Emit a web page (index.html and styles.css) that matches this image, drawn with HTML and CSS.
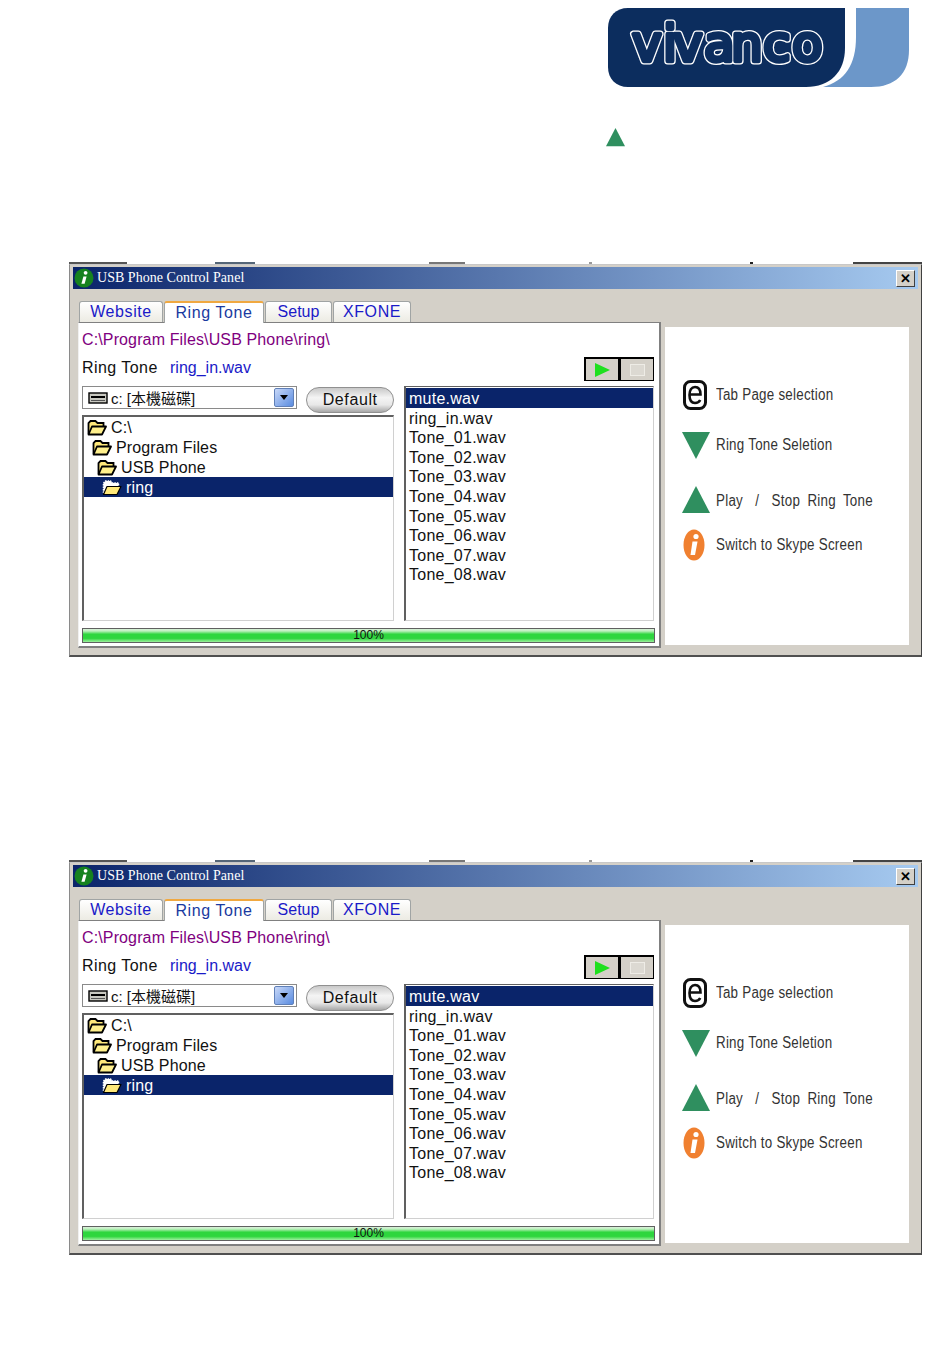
FILE: index.html
```html
<!DOCTYPE html>
<html lang="en">
<head>
    <meta charset="UTF-8">
    <meta name="viewport" content="width=device-width, initial-scale=1.0">
    <title>USB Phone Control Panel</title>
    <link rel="stylesheet" href="styles.css">
</head>
<body>
    <svg class="defs" width="0" height="0">
        <symbol id="folder" viewBox="0 0 20 16">
            <path d="M1.500 14V3l2-2h5l2 2h6v3" fill="#ffe97a" stroke="#000" stroke-width="1.800"/>
            <path d="M1.500 14.500 5 6.500h14l-4 8z" fill="#fff08c" stroke="#000" stroke-width="1.800" stroke-linejoin="round"/>
        </symbol>
        <symbol id="folder-open" viewBox="0 0 20 16">
            <path d="M1.500 13V3l2-2h5l2 2h6v3" fill="#fff" stroke="#fff" stroke-width="1.500" stroke-dasharray="1.500 1"/>
            <path d="M1.500 14.500 5 6.500h14l-4 8z" fill="#ffe97a" stroke="#000" stroke-width="1.200" stroke-linejoin="round"/>
        </symbol>
        <symbol id="drive" viewBox="0 0 20 12">
            <rect x="1" y="1" width="18" height="10" fill="#c8c8c0" stroke="#000" stroke-width="1.400"/>
            <rect x="3" y="4" width="14" height="2" fill="#000"/>
            <rect x="3" y="8" width="14" height="1" fill="#555"/>
        </symbol>
        <symbol id="badge-green" viewBox="0 0 20 20">
            <circle cx="10" cy="10" r="9.500" fill="#16821f"/>
            <circle cx="11.600" cy="4.800" r="1.900" fill="#fff"/>
            <path d="M9.400 8.400h3.200l-2 7.400h-3.200z" fill="#fff"/>
        </symbol>
        <symbol id="icon-e" viewBox="0 0 24 30">
            <rect x="1.500" y="1.500" width="21" height="27" rx="6" fill="#fff" stroke="#111" stroke-width="3"/>
            <path d="M7 14.500h10.500c0-5-2-7.500-5.500-7.500S6.500 10 6.500 15s2 8 5.500 8c2.500 0 4.200-1 5.200-3" fill="none" stroke="#111" stroke-width="2.600"/>
        </symbol>
        <symbol id="icon-down" viewBox="0 0 28 28"><path d="M0 1h28L14 28z" fill="#2f8f5f"/></symbol>
        <symbol id="icon-up" viewBox="0 0 28 28"><path d="M0 27h28L14 0z" fill="#2f8f5f"/></symbol>
        <symbol id="icon-info" viewBox="0 0 22 32">
            <ellipse cx="11" cy="16" rx="10.500" ry="15.500" fill="#f08030"/>
            <circle cx="13" cy="7.500" r="2.600" fill="#fff"/>
            <path d="M9.500 12.500h5L12 26H7.500z" fill="#fff"/>
        </symbol>
    </svg>

    <header class="page-top">
        <svg class="logo" width="301" height="79" viewBox="0 0 301 79">
            <defs>
                <text id="logo-word" class="logo-text" x="24 55 65 96 123 155 184" y="53">vivanco</text>
            </defs>
            <path d="M248 0h53v42c0 24-14 37-38 37h-48c22-6 33-22 33-50z" fill="#6c97c9"/>
            <path d="M20 0h217v40c0 24-15 39-39 39H20C8 79 0 71 0 59V20C0 8 8 0 20 0z" fill="#0c2d5e"/>
            <use class="logo-outline" href="#logo-word"/>
            <use class="logo-fill" href="#logo-word"/>
        </svg>
        <svg class="top-arrow" width="19" height="19"><use href="#icon-up"/></svg>
    </header>

    <section class="shot">
        <div class="scrap"></div>
        <div class="window">
            <div class="titlebar">
                <svg class="title-icon" width="20" height="20"><use href="#badge-green"/></svg>
                <span class="title-text">USB Phone Control Panel</span>
                <span class="close">&#10005;</span>
            </div>
            <div class="window-body">
                <div class="left-col">
                    <div class="tabs">
                        <span class="tab tab-website">Website</span>
                        <span class="tab tab-ring active">Ring Tone</span>
                        <span class="tab tab-setup">Setup</span>
                        <span class="tab tab-xfone">XFONE</span>
                    </div>
                    <div class="panel">
                        <div class="path">C:\Program Files\USB Phone\ring\</div>
                        <div class="tone-row">
                            <span class="tone-label">Ring Tone</span>
                            <span class="tone-file">ring_in.wav</span>
                            <span class="player">
                                <span class="player-btn"><span class="play"></span></span>
                                <span class="player-btn"><span class="stop"></span></span>
                            </span>
                        </div>
                        <div class="browser">
                            <div class="browser-left">
                                <div class="combo-row">
                                    <div class="combo">
                                        <svg class="drive" width="20" height="12"><use href="#drive"/></svg>
                                        <span class="combo-text">c: [本機磁碟]</span>
                                        <span class="combo-arrow"></span>
                                    </div>
                                    <span class="default-btn">Default</span>
                                </div>
                                <div class="tree">
                                    <div class="tree-row level-0"><svg width="20" height="16"><use href="#folder"/></svg>C:\</div>
                                    <div class="tree-row level-1"><svg width="20" height="16"><use href="#folder"/></svg>Program Files</div>
                                    <div class="tree-row level-2"><svg width="20" height="16"><use href="#folder"/></svg>USB Phone</div>
                                    <div class="tree-row level-3 selected"><svg width="20" height="16"><use href="#folder-open"/></svg>ring</div>
                                </div>
                            </div>
                            <div class="file-list">
                                <div class="file selected">mute.wav</div>
                                <div class="file">ring_in.wav</div>
                                <div class="file">Tone_01.wav</div>
                                <div class="file">Tone_02.wav</div>
                                <div class="file">Tone_03.wav</div>
                                <div class="file">Tone_04.wav</div>
                                <div class="file">Tone_05.wav</div>
                                <div class="file">Tone_06.wav</div>
                                <div class="file">Tone_07.wav</div>
                                <div class="file">Tone_08.wav</div>
                            </div>
                        </div>
                        <div class="progress">100%</div>
                    </div>
                </div>
                <div class="help">
                    <div class="help-row row-tab"><svg width="24" height="30"><use href="#icon-e"/></svg><span>Tab Page selection</span></div>
                    <div class="help-row row-ring"><svg class="icon-wide" width="28" height="28"><use href="#icon-down"/></svg><span>Ring Tone Seletion</span></div>
                    <div class="help-row row-play"><svg class="icon-wide" width="28" height="28"><use href="#icon-up"/></svg><span class="wide">Play <i>/</i> Stop Ring Tone</span></div>
                    <div class="help-row row-skype"><svg width="22" height="32"><use href="#icon-info"/></svg><span>Switch to Skype Screen</span></div>
                </div>
            </div>
        </div>
    </section>

    <section class="shot second">
        <div class="scrap"></div>
        <div class="window">
            <div class="titlebar">
                <svg class="title-icon" width="20" height="20"><use href="#badge-green"/></svg>
                <span class="title-text">USB Phone Control Panel</span>
                <span class="close">&#10005;</span>
            </div>
            <div class="window-body">
                <div class="left-col">
                    <div class="tabs">
                        <span class="tab tab-website">Website</span>
                        <span class="tab tab-ring active">Ring Tone</span>
                        <span class="tab tab-setup">Setup</span>
                        <span class="tab tab-xfone">XFONE</span>
                    </div>
                    <div class="panel">
                        <div class="path">C:\Program Files\USB Phone\ring\</div>
                        <div class="tone-row">
                            <span class="tone-label">Ring Tone</span>
                            <span class="tone-file">ring_in.wav</span>
                            <span class="player">
                                <span class="player-btn"><span class="play"></span></span>
                                <span class="player-btn"><span class="stop"></span></span>
                            </span>
                        </div>
                        <div class="browser">
                            <div class="browser-left">
                                <div class="combo-row">
                                    <div class="combo">
                                        <svg class="drive" width="20" height="12"><use href="#drive"/></svg>
                                        <span class="combo-text">c: [本機磁碟]</span>
                                        <span class="combo-arrow"></span>
                                    </div>
                                    <span class="default-btn">Default</span>
                                </div>
                                <div class="tree">
                                    <div class="tree-row level-0"><svg width="20" height="16"><use href="#folder"/></svg>C:\</div>
                                    <div class="tree-row level-1"><svg width="20" height="16"><use href="#folder"/></svg>Program Files</div>
                                    <div class="tree-row level-2"><svg width="20" height="16"><use href="#folder"/></svg>USB Phone</div>
                                    <div class="tree-row level-3 selected"><svg width="20" height="16"><use href="#folder-open"/></svg>ring</div>
                                </div>
                            </div>
                            <div class="file-list">
                                <div class="file selected">mute.wav</div>
                                <div class="file">ring_in.wav</div>
                                <div class="file">Tone_01.wav</div>
                                <div class="file">Tone_02.wav</div>
                                <div class="file">Tone_03.wav</div>
                                <div class="file">Tone_04.wav</div>
                                <div class="file">Tone_05.wav</div>
                                <div class="file">Tone_06.wav</div>
                                <div class="file">Tone_07.wav</div>
                                <div class="file">Tone_08.wav</div>
                            </div>
                        </div>
                        <div class="progress">100%</div>
                    </div>
                </div>
                <div class="help">
                    <div class="help-row row-tab"><svg width="24" height="30"><use href="#icon-e"/></svg><span>Tab Page selection</span></div>
                    <div class="help-row row-ring"><svg class="icon-wide" width="28" height="28"><use href="#icon-down"/></svg><span>Ring Tone Seletion</span></div>
                    <div class="help-row row-play"><svg class="icon-wide" width="28" height="28"><use href="#icon-up"/></svg><span class="wide">Play <i>/</i> Stop Ring Tone</span></div>
                    <div class="help-row row-skype"><svg width="22" height="32"><use href="#icon-info"/></svg><span>Switch to Skype Screen</span></div>
                </div>
            </div>
        </div>
    </section>
</body>
</html>
```
FILE: styles.css
```css
/* Page */
body {
    font-family: "Liberation Sans", Arial, sans-serif;
    margin: 0;
    padding: 0;
    background-color: white;
    color: #111;
    overflow: hidden;
}

.defs {
    position: absolute;
}

.page-top {
    height: 262px;
    box-sizing: border-box;
    padding-top: 8px;
}

.logo {
    display: block;
    margin-left: 608px;
}

.logo-text {
    font-family: "DejaVu Sans", sans-serif;
    font-size: 50px;
}

.logo-outline {
    fill: white;
    stroke: white;
    stroke-width: 7px;
    stroke-linejoin: round;
}

.logo-fill {
    fill: #0c2d5e;
    stroke: #0c2d5e;
    stroke-width: 4.500px;
    stroke-linejoin: round;
}

.top-arrow {
    display: block;
    margin: 41px 0 0 606px;
}

.shot {
    margin-left: 69px;
    width: 853px;
}

.second {
    margin-top: 203px;
}

/* bits of the cropped-off row above each window */
.scrap {
    height: 2px;
    background:
        linear-gradient(#555, #555) 0 0 / 58px 2px no-repeat,
        linear-gradient(#567, #567) 146px 0 / 40px 2px no-repeat,
        linear-gradient(#777, #777) 360px 0 / 36px 2px no-repeat,
        linear-gradient(#999, #999) 520px 0 / 3px 2px no-repeat,
        linear-gradient(#222, #222) 681px 0 / 3px 2px no-repeat,
        linear-gradient(#444, #444) 784px 0 / 69px 2px no-repeat;
}

/* Window */
.window {
    box-sizing: border-box;
    height: 393px;
    padding: 2px 3px 0 3px;
    background-color: #d4d0c8;
    border-top: 1px solid #c8c8c8;
    border-left: 1px solid #8a8a8a;
    border-right: 1px solid #404040;
    border-bottom: 2px solid #505050;
}

.titlebar {
    display: flex;
    align-items: center;
    height: 22px;
    padding: 0 3px 0 1px;
    background: linear-gradient(to right, #0a246a, #a6caf0);
}

.title-text {
    margin-left: 3px;
    font-family: "Liberation Serif", serif;
    font-size: 14px;
    letter-spacing: 0.03px;
    color: white;
}

.close {
    margin-left: auto;
    width: 19px;
    height: 17px;
    font-size: 13px;
    font-weight: bold;
    line-height: 15px;
    text-align: center;
    color: black;
    background-color: #d4d0c8;
    border: 1px solid;
    border-color: #fff #404040 #404040 #fff;
    box-sizing: border-box;
}

.window-body {
    display: flex;
    margin-left: 5px;
}

.left-col {
    width: 583px;
}

/* Tabs */
.tabs {
    display: flex;
    align-items: flex-end;
    height: 21px;
    margin-top: 12px;
    padding-left: 1px;
}

.tab {
    box-sizing: border-box;
    height: 21px;
    margin-right: 1px;
    font-size: 16px;
    line-height: 20px;
    letter-spacing: 0.6px;
    text-align: center;
    color: #1a1ac8;
    background: linear-gradient(#fff, #ecebe3);
    border: 1px solid #a0a4a4;
    border-bottom: none;
    border-radius: 3px 3px 0 0;
}

.tab-website { width: 84px; }
.tab-ring { width: 100px; }
.tab-setup { width: 67px; letter-spacing: 0; }
.tab-xfone { width: 78px; }

.tab.active {
    height: 22px;
    position: relative;
    top: 1px;
    color: #1a3aa0;
    background: white;
    border-top: 2px solid #f0a840;
}

/* Left panel */
.panel {
    box-sizing: border-box;
    height: 326px;
    padding: 8px 0 0 3px;
    background: white;
    border-top: 1px solid #808080;
    border-left: 1px solid #f0f0f0;
    border-right: 2px solid #808080;
    border-bottom: 2px solid #808080;
}

.path {
    height: 18px;
    font-size: 16px;
    line-height: 18px;
    letter-spacing: 0.13px;
    color: #800080;
}

.tone-row {
    display: flex;
    align-items: center;
    height: 24px;
    margin-top: 8px;
    font-size: 16px;
}

.tone-label {
    width: 88px;
    margin-bottom: 2px;
    letter-spacing: 0.45px;
}

.tone-file {
    margin-bottom: 2px;
    color: #1a1ac8;
}

.player {
    display: flex;
    margin-left: auto;
    margin-right: 5px;
}

.player-btn {
    box-sizing: border-box;
    display: flex;
    align-items: center;
    justify-content: center;
    width: 35px;
    height: 24px;
    background-color: #d4d0c8;
    border: 1px solid #000;
    border-width: 2px 1px 1px 2px;
}

.play {
    border-left: 15px solid #1ee01e;
    border-top: 7px solid transparent;
    border-bottom: 7px solid transparent;
}

.stop {
    width: 13px;
    height: 10px;
    background-color: #dcd9d2;
    border: 1px solid #eeece6;
}

.browser {
    display: flex;
    margin-top: 5px;
}

.browser-left {
    width: 312px;
}

.combo-row {
    display: flex;
    height: 29px;
}

.combo {
    box-sizing: border-box;
    display: flex;
    align-items: center;
    width: 216px;
    height: 23px;
    padding: 0 2px 0 5px;
    border: 1px solid #8a8a8a;
    background: white;
}

.combo-text {
    margin-left: 3px;
    font-family: "Liberation Sans", "Noto Sans CJK TC", sans-serif;
    font-size: 15px;
}

.combo-arrow {
    box-sizing: border-box;
    position: relative;
    margin-left: auto;
    width: 20px;
    height: 19px;
    background: linear-gradient(135deg, #c8d8f8, #5a8ce0);
    border: 1px solid #6080b8;
    border-radius: 2px;
}

/* small triangle on the blue drop-down button */
.combo-arrow::after {
    content: "";
    position: absolute;
    left: 5px;
    top: 6px;
    border-top: 5px solid #000;
    border-left: 4px solid transparent;
    border-right: 4px solid transparent;
}

.default-btn {
    box-sizing: border-box;
    width: 88px;
    height: 26px;
    margin: 1px 0 0 9px;
    font-size: 16px;
    line-height: 24px;
    letter-spacing: 0.6px;
    text-align: center;
    background: linear-gradient(#c8c8c8, #f4f4f4 40%, #e8e8e8 70%, #a8a8a8);
    border: 1px solid #909090;
    border-radius: 13px;
}

.tree {
    box-sizing: border-box;
    height: 206px;
    border-top: 2px solid #606060;
    border-left: 2px solid #606060;
    border-right: 1px solid #d0d0d0;
    border-bottom: 1px solid #d0d0d0;
}

.tree-row {
    box-sizing: border-box;
    display: flex;
    align-items: center;
    gap: 4px;
    height: 20px;
    padding-top: 2px;
    font-size: 16px;
    letter-spacing: 0.13px;
}

.tree-row svg {
    flex-shrink: 0;
}

.level-0 { padding-left: 3px; }
.level-1 { padding-left: 8px; }
.level-2 { padding-left: 13px; }
.level-3 { padding-left: 18px; }

.tree-row.selected {
    color: white;
    background-color: #0a246a;
}

.file-list {
    box-sizing: border-box;
    width: 250px;
    height: 235px;
    margin-left: 10px;
    padding-top: 1px;
    border-top: 1px solid #606060;
    border-left: 2px solid #606060;
    border-right: 1px solid #d0d0d0;
    border-bottom: 1px solid #d0d0d0;
}

.file {
    height: 19.6px;
    padding-left: 3px;
    font-size: 16px;
    line-height: 21px;
    letter-spacing: 0.25px;
}

.file.selected {
    color: white;
    background-color: #0a246a;
}

.progress {
    box-sizing: border-box;
    width: 573px;
    height: 15px;
    margin-top: 7px;
    font-size: 12px;
    line-height: 13px;
    text-align: center;
    background: linear-gradient(#d8f0d8, #c0f0c0 15%, #2ed63e 40%, #2ed63e 72%, #a0f0a0);
    border: 1px solid #606060;
}

/* Right help panel */
.help {
    box-sizing: border-box;
    width: 244px;
    height: 318px;
    margin: 38px 0 0 4px;
    padding: 53px 0 0 18px;
    background: white;
}

.help-row {
    display: grid;
    grid-template-columns: 33px 1fr;
    align-items: center;
    font-size: 16px;
    letter-spacing: 0.3px;
    color: #333;
}

.help-row svg {
    display: block;
}

/* the lettering in the reference is squeezed, no narrow font is installed */
.help-row span {
    white-space: nowrap;
    transform: scaleX(0.835);
    transform-origin: left center;
}

.help-row .icon-wide {
    margin-left: -1px;
}

.help-row i {
    font-style: normal;
    margin: 0 6px;
}

.help-row .wide {
    word-spacing: 4px;
    padding-top: 2px;
}

.row-ring { margin-top: 21px; }
.row-play { margin-top: 27px; }
.row-skype { margin-top: 15px; }
```
